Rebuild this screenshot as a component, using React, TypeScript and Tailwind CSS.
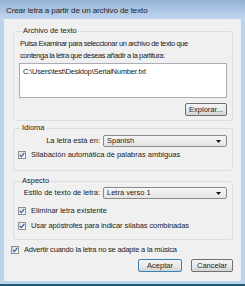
import React from "react";

const font = { fontFamily: '"Liberation Sans", Arial, sans-serif' };

function Check() {
  return (
    <span className="inline-flex w-[8px] h-[8px] border border-[#8e8f8f] bg-gradient-to-br from-[#dcdcdc] to-[#ffffff] items-center justify-center shrink-0">
      <svg width="6" height="6" viewBox="0 0 6 6">
        <path d="M0.8 3 L2.4 4.6 L5.3 1" stroke="#3c5fa8" strokeWidth="1.2" fill="none" />
      </svg>
    </span>
  );
}

function Select({ value }: { value: string }) {
  return (
    <div className="flex items-center w-[124px] h-[12px] border border-[#8a8a8a] rounded-[2px] bg-gradient-to-b from-[#f6f6f6] to-[#e4e4e4] pl-[3px] pr-[5px]">
      <span className="flex-1 leading-none">{value}</span>
      <svg width="5" height="3" viewBox="0 0 5 3">
        <path d="M0 0 H5 L2.5 3 Z" fill="#111" />
      </svg>
    </div>
  );
}

function Button({ label, def }: { label: string; def?: boolean }) {
  return (
    <div
      className={
        "flex items-center justify-center h-[13px] rounded-[2px] border bg-gradient-to-b from-[#f4f4f4] via-[#e9e9e9] to-[#d5d5d5] leading-none " +
        (def ? "border-[#3c7fb1] w-[44px]" : "border-[#707070] w-[42px]")
      }
    >
      {label}
    </div>
  );
}

export default function App() {
  return (
    <div
      className="w-[245px] h-[286px] flex flex-col bg-[#bdd3ec] text-[7.5px] text-[#1b1b1b] overflow-hidden"
      style={font}
    >
      <div className="h-[19px] shrink-0 bg-gradient-to-b from-[#93b2d8] to-[#c1d6ee] pl-[6px] pt-[7px] text-[8px] leading-none text-[#1e1e1e] tracking-[-0.1px]">
        Crear letra a partir de un archivo de texto
      </div>
      <div className="flex-1 flex pl-[4px] pr-[4px] pb-[3px]">
        <div className="flex-1 bg-[#f0f0f0] border-l border-r border-[#e6eef8] flex flex-col">
          <fieldset className="ml-[8px] mr-[7px] mt-[7px] h-[95px] border border-[#d5dfe5] rounded-[3px] px-[5px]">
            <legend className="ml-[3px] px-[1px] leading-[10px]">Archivo de texto</legend>
            <div className="leading-[12px] mt-[2px] ml-[1px] tracking-[-0.4px]">
              Pulsa Examinar para seleccionar un archivo de texto que
              <br />
              contenga la letra que deseas añadir a la partitura:
            </div>
            <div className="mt-[1px] h-[35px] border border-[#abadb3] bg-white pl-[3px] pt-[4px] leading-none tracking-[-0.2px]">
              C:\Users\test\Desktop\SerialNumber.txt
            </div>
            <div className="flex justify-end mt-[5px]">
              <Button label="Explorar..." />
            </div>
          </fieldset>
          <fieldset className="ml-[8px] mr-[7px] mt-[2px] h-[48px] border border-[#d5dfe5] rounded-[3px] px-[4px]">
            <legend className="ml-[3px] px-[1px] leading-[10px]">Idioma</legend>
            <div className="flex items-center justify-end mt-[2px] gap-[3px] pr-[1px]">
              <span>La letra está en:</span>
              <Select value="Spanish" />
            </div>
            <div className="flex items-center gap-[5px] mt-[4px]">
              <Check />
              <span className="leading-none">Silabación automática de palabras ambiguas</span>
            </div>
          </fieldset>
          <fieldset className="ml-[8px] mr-[7px] mt-[5px] h-[64px] border border-[#d5dfe5] rounded-[3px] px-[4px]">
            <legend className="ml-[3px] px-[1px] leading-[10px]">Aspecto</legend>
            <div className="flex items-center justify-end mt-[1px] gap-[3px] pr-[1px]">
              <span>Estilo de texto de letra:</span>
              <Select value="Letra verso 1" />
            </div>
            <div className="flex items-center gap-[5px] mt-[8px]">
              <Check />
              <span className="leading-none">Eliminar letra existente</span>
            </div>
            <div className="flex items-center gap-[5px] mt-[7px]">
              <Check />
              <span className="leading-none tracking-[-0.1px]">Usar apóstrofes para indicar sílabas combinadas</span>
            </div>
          </fieldset>
          <div className="flex items-center gap-[5px] mt-[6px] ml-[6px]">
            <Check />
            <span className="leading-none tracking-[-0.2px]">Advertir cuando la letra no se adapte a la música</span>
          </div>
          <div className="flex justify-end gap-[9px] mt-[5px] mr-[7px]">
            <Button label="Aceptar" def />
            <Button label="Cancelar" />
          </div>
        </div>
      </div>
      <div className="h-[2px] shrink-0 bg-[#1f5a70]" />
    </div>
  );
}
